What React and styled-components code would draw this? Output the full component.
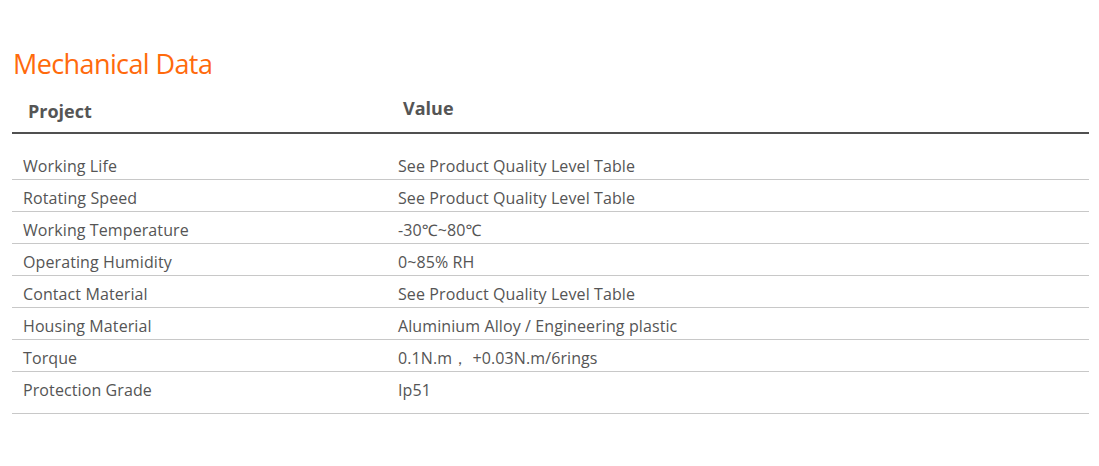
import React from 'react'
import styled, { createGlobalStyle } from 'styled-components'

const Global = createGlobalStyle`
body {
  margin: 0;
  background: #fff;
  font-family: "Open Sans", "Noto Sans", sans-serif;
}
`

const Section = styled.section`
padding: 44px 10px 0 12px;
`

const Title = styled.h2`
margin: 0 0 0 1px;
font-size: 27px;
font-weight: 400;
line-height: 40px;
letter-spacing: -0.6px;
color: #ff6a0c;
`

const Table = styled.div`
display: grid;
grid-template-columns: 375px 1fr;
margin-top: 6px;
`

const Head = styled.div`
padding: ${({ $top }) => $top}px 0 0 ${({ $left }) => $left}px;
height: ${({ $top }) => 42 - $top}px;
border-bottom: 2px solid #505050;
font-size: 18px;
font-weight: 700;
color: #555;
line-height: 24px;
`

const Cell = styled.div`
padding: ${({ $first }) => ($first ? 22 : 8)}px 0 ${({ $last }) => ($last ? 13 : 3)}px 11px;
line-height: 20px;
font-size: 16px;
color: #555;
border-bottom: 1px solid #c8c8c8;
letter-spacing: 0.1px;
white-space: pre;
`

const rows = [
  ['Working Life', 'See Product Quality Level Table'],
  ['Rotating Speed', 'See Product Quality Level Table'],
  ['Working Temperature', '-30\u2103~80\u2103'],
  ['Operating Humidity', '0~85% RH'],
  ['Contact Material', 'See Product Quality Level Table'],
  ['Housing Material', 'Aluminium Alloy / Engineering plastic'],
  ['Torque', '0.1N.m\uff0c +0.03N.m/6rings'],
  ['Protection Grade', 'Ip51'],
]

export default function App() {
  return (
    <>
      <Global />
      <Section>
        <Title>Mechanical Data</Title>
        <Table>
          <Head $top={9} $left={16}>Project</Head>
          <Head $top={6} $left={16}>Value</Head>
          {rows.map(([k, v], i) => (
            <React.Fragment key={k}>
              <Cell $first={i === 0} $last={i === rows.length - 1}>{k}</Cell>
              <Cell $first={i === 0} $last={i === rows.length - 1}>{v}</Cell>
            </React.Fragment>
          ))}
        </Table>
      </Section>
    </>
  )
}
